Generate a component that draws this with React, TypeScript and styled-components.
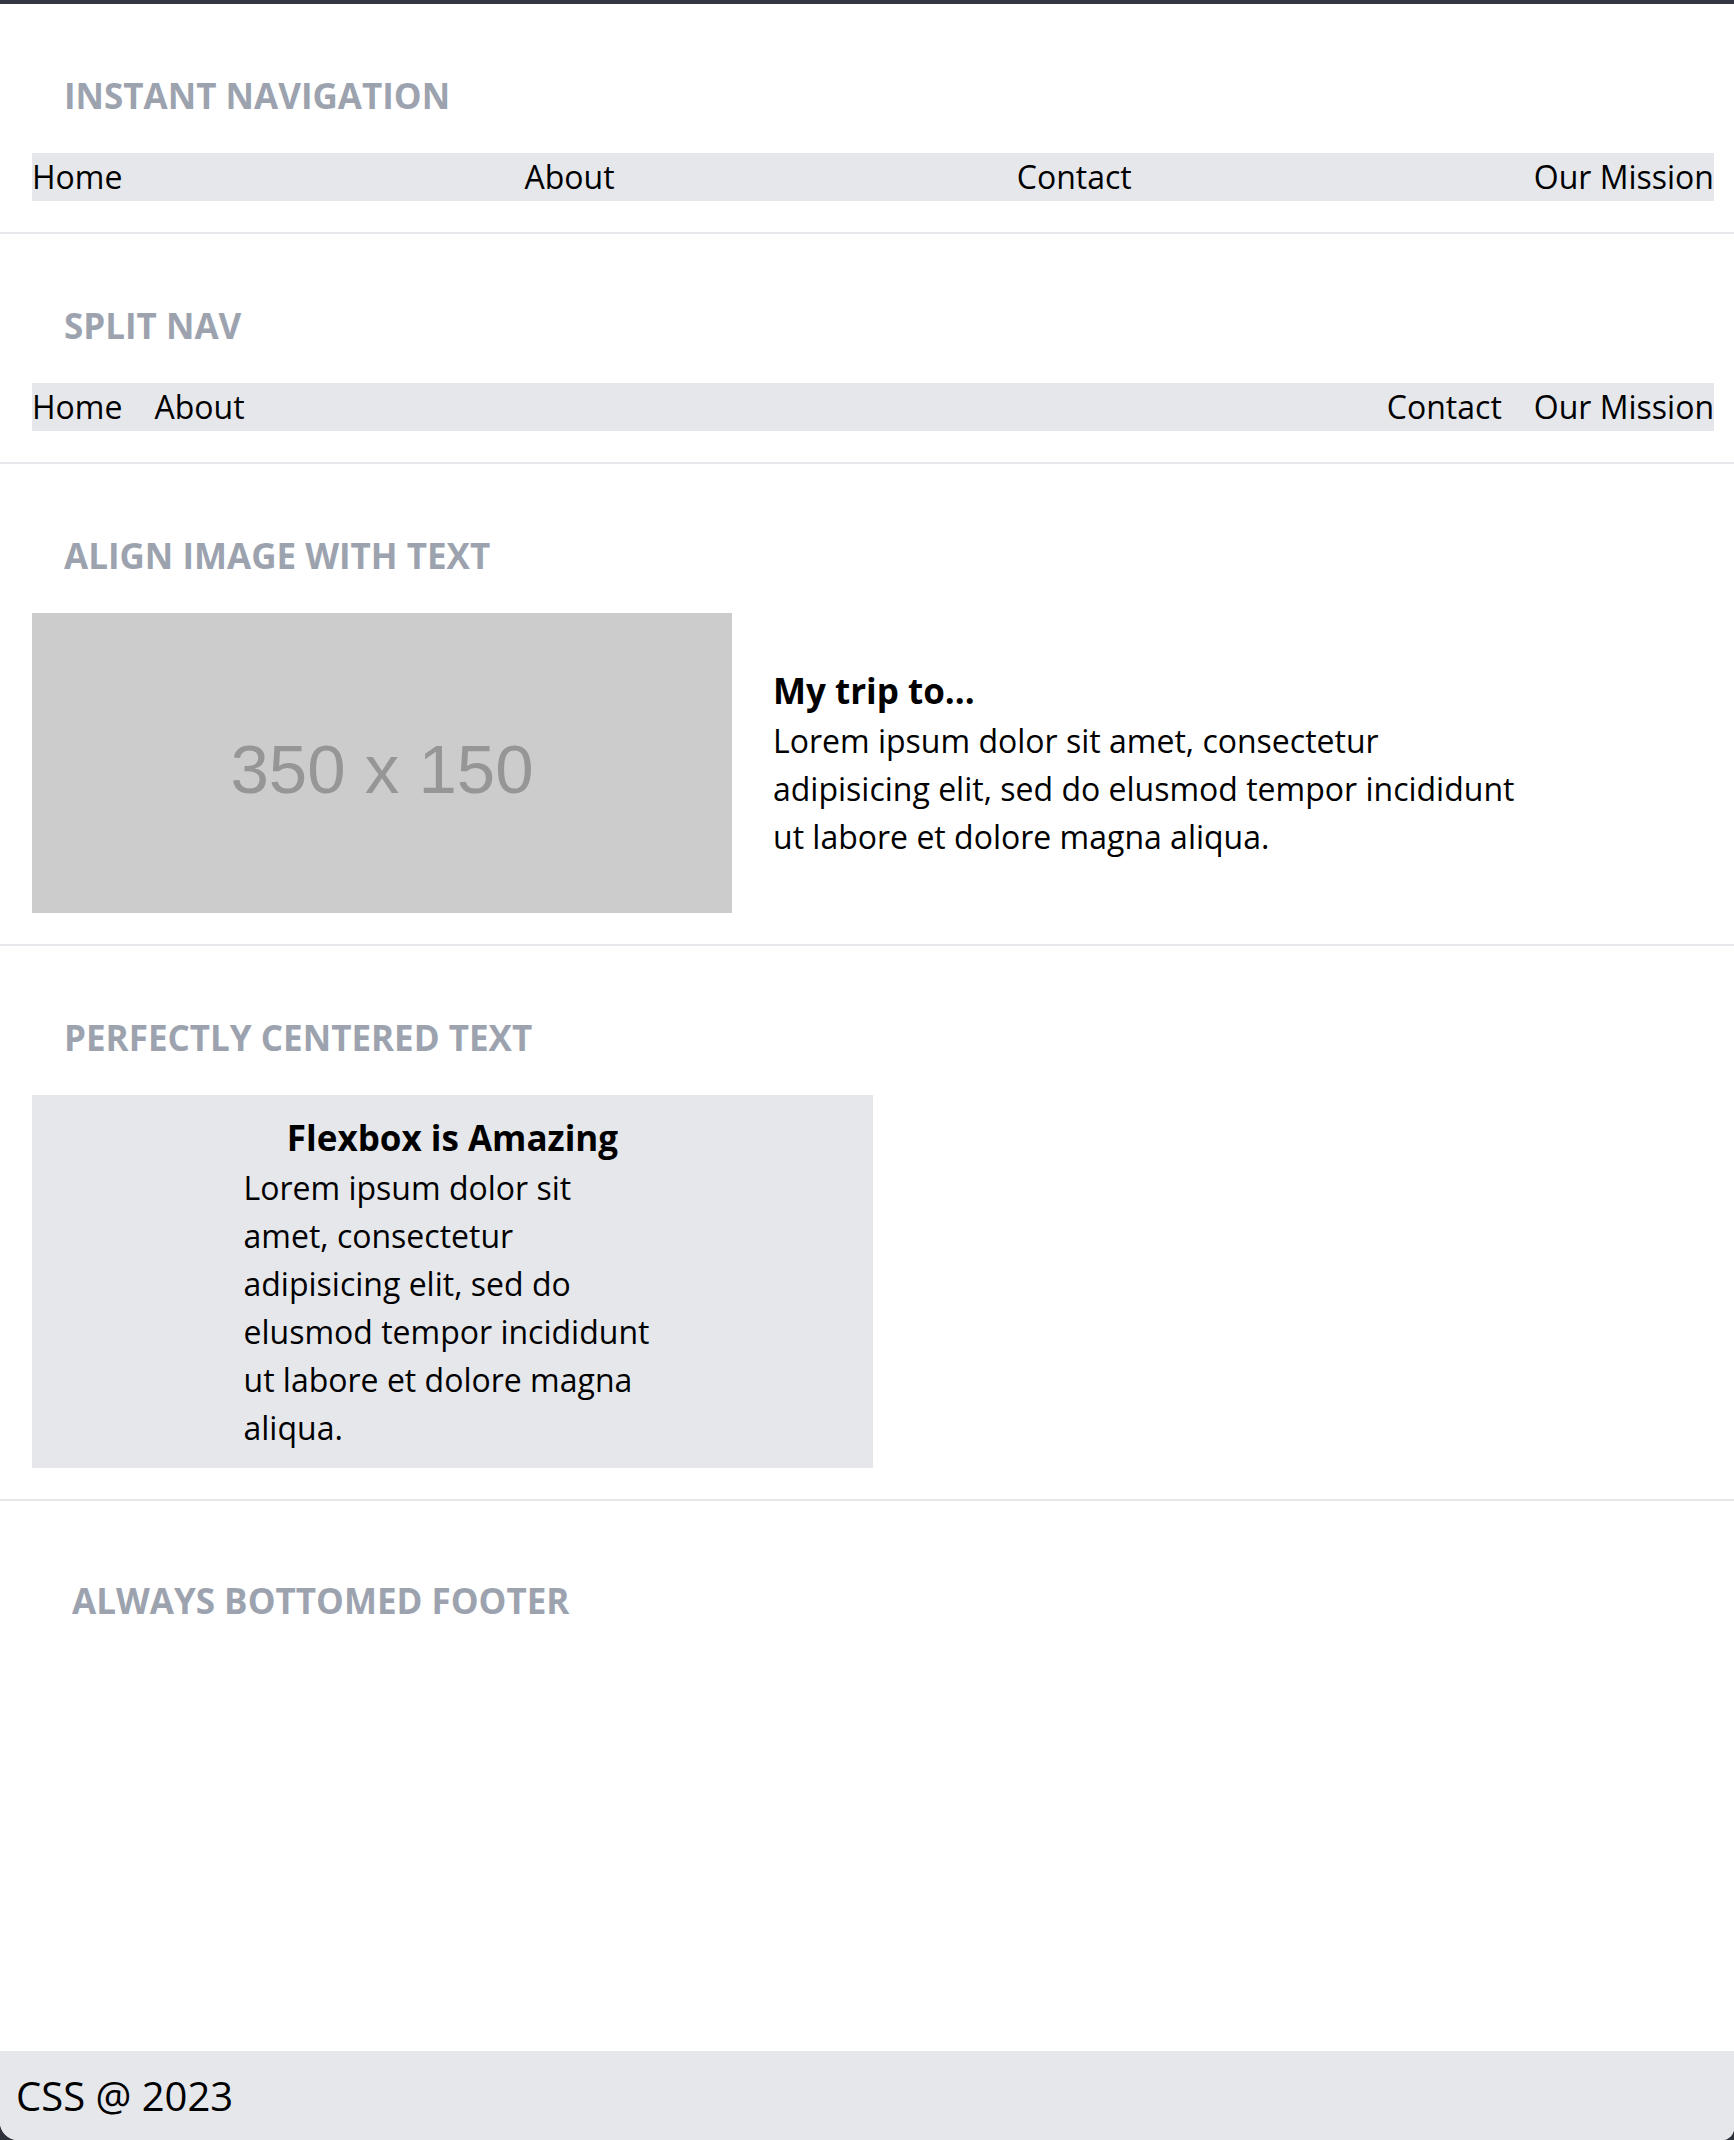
import React from "react";
import styled, { createGlobalStyle } from "styled-components";

const GlobalStyle = createGlobalStyle`
  html, body {
    margin: 0;
    padding: 0;
    background: #2f323a;
  }
  body {
    font-family: "Open Sans", "Noto Sans", sans-serif;
    color: #000;
  }
  * { box-sizing: border-box; }
`;

const Page = styled.div`
  min-height: 100vh;
  display: flex;
  flex-direction: column;
  background: #ffffff;
  border-top: 4px solid #323743;
  border-bottom-left-radius: 18px;
  border-bottom-right-radius: 12px;
  overflow: hidden;
  font-size: 32px;
  line-height: 48px;
`;

const Section = styled.section<{ $last?: boolean }>`
  padding: ${(p) => (p.$last ? "40px 20px 32px 40px" : "32px 20px 31px 32px")};
  border-bottom: ${(p) => (p.$last ? "none" : "2px solid #e5e7eb")};
`;

const Heading = styled.h2`
  margin: 33px 32px 30px;
  font-size: 35px;
  line-height: 54px;
  font-weight: 700;
  text-transform: uppercase;
  color: #9ca3af;
`;

const Nav = styled.nav<{ $split?: boolean }>`
  display: flex;
  justify-content: ${(p) => (p.$split ? "flex-start" : "space-between")};
  gap: ${(p) => (p.$split ? "32px" : "0")};
  background: #e5e7eb;
  height: 48px;
`;

const NavLink = styled.a<{ $push?: boolean }>`
  color: #000;
  text-decoration: none;
  white-space: nowrap;
  margin-left: ${(p) => (p.$push ? "auto" : "0")};
`;

const MediaRow = styled.div`
  display: flex;
  align-items: center;
  gap: 41px;
`;

const Placeholder = styled.div`
  flex: none;
  width: 700px;
  height: 300px;
  background: #cccccc;
  color: #969696;
  display: flex;
  align-items: center;
  justify-content: center;
  font-family: "Liberation Sans", Arial, sans-serif;
  font-size: 69px;
  line-height: 1;
  padding-top: 12px;
`;

const MediaText = styled.div`
  max-width: 752px;
`;

const Title = styled.h3<{ $center?: boolean }>`
  margin: 0;
  font-size: 35px;
  line-height: 52px;
  font-weight: 700;
  text-align: ${(p) => (p.$center ? "center" : "left")};
`;

const Para = styled.p`
  margin: 0;
`;

const CenterBox = styled.div`
  width: 50%;
  background: #e5e7eb;
  display: flex;
  justify-content: center;
  align-items: center;
  padding: 17px 0 16px;
`;

const CenterInner = styled.div`
  width: 418px;
`;

const Main = styled.main`
  flex: 1;
`;

const Footer = styled.footer`
  background: #e5e7eb;
  height: 89px;
  display: flex;
  align-items: center;
  padding-left: 16px;
  font-size: 40px;
  line-height: 1;
`;

const links = ["Home", "About", "Contact", "Our Mission"];

export default function App() {
  return (
    <>
      <GlobalStyle />
      <Page>
        <Main>
          <Section>
            <Heading>Instant Navigation</Heading>
            <Nav>
              {links.map((l) => (
                <NavLink key={l} href="#">
                  {l}
                </NavLink>
              ))}
            </Nav>
          </Section>
          <Section>
            <Heading>Split Nav</Heading>
            <Nav $split>
              {links.map((l, i) => (
                <NavLink key={l} href="#" $push={i === 2}>
                  {l}
                </NavLink>
              ))}
            </Nav>
          </Section>
          <Section>
            <Heading>Align Image with Text</Heading>
            <MediaRow>
              <Placeholder>350 x 150</Placeholder>
              <MediaText>
                <Title>My trip to...</Title>
                <Para>
                  Lorem ipsum dolor sit amet, consectetur adipisicing elit, sed do elusmod tempor
                  incididunt ut labore et dolore magna aliqua.
                </Para>
              </MediaText>
            </MediaRow>
          </Section>
          <Section>
            <Heading>Perfectly Centered Text</Heading>
            <CenterBox>
              <CenterInner>
                <Title $center>Flexbox is Amazing</Title>
                <Para>
                  Lorem ipsum dolor sit amet, consectetur adipisicing elit, sed do elusmod tempor
                  incididunt ut labore et dolore magna aliqua.
                </Para>
              </CenterInner>
            </CenterBox>
          </Section>
          <Section $last>
            <Heading>Always Bottomed Footer</Heading>
          </Section>
        </Main>
        <Footer>CSS @ 2023</Footer>
      </Page>
    </>
  );
}
